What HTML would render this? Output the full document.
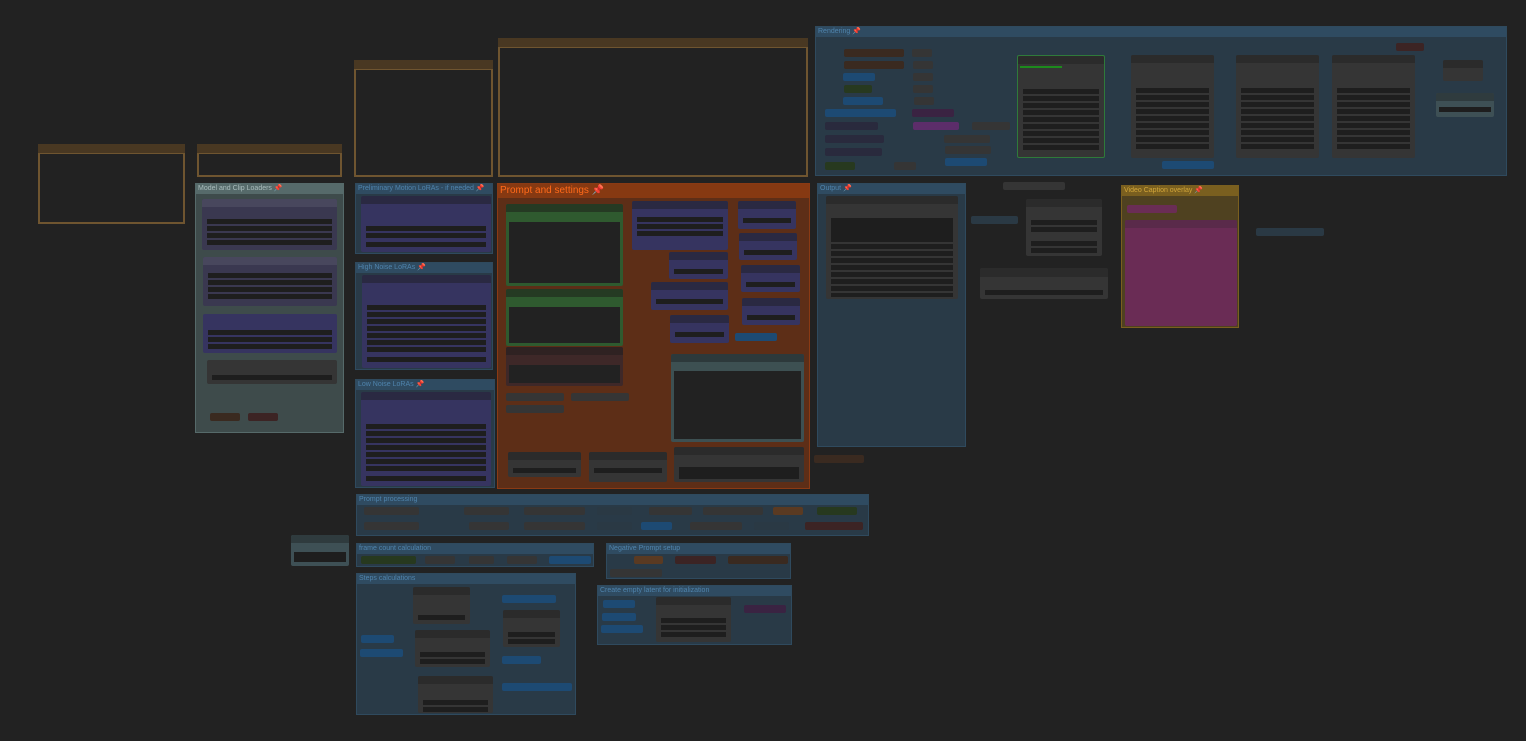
<!DOCTYPE html><html><head><style>
body{margin:0;width:1526px;height:741px;background:#222;overflow:hidden;font-family:"Liberation Sans",sans-serif;position:relative}
div{position:absolute;box-sizing:border-box}
.g{background:#293a47;border:1px solid #2f4a5e}
.g>.h{left:0;top:0;right:0;height:10px;background:#2f4b61;color:#4f84ad;font-size:7px;line-height:10px;padding-left:2px;white-space:nowrap;overflow:hidden}
.f{background:#222;border:2px solid #6f5530}
.f>.h{left:-2px;top:-10px;right:-2px;height:9px;background:#493822}
.n{background:#353535;border-radius:2px}
.n>.t{left:0;top:0;right:0;height:8px;background:#2b2b2b;border-radius:2px 2px 0 0}
.p{background:#363460}.p>.t{background:#2a2942}
.w{background:#1e1e1e;height:5px;left:5px;right:5px}
.s{height:8px;border-radius:2px;background:#353535}
.b{background:#1d4a73}.gr{background:#27391f}.br{background:#3a2a20}.rd{background:#3c2424}.pu{background:#3a2342}.dk{background:#292a3d}
</style></head><body>
<!-- frames -->
<div class="f" style="left:38px;top:152px;width:147px;height:72px"><div class="h"></div></div>
<div class="f" style="left:197px;top:152px;width:145px;height:25px"><div class="h"></div></div>
<div class="f" style="left:354px;top:68px;width:139px;height:109px"><div class="h"></div></div>
<div class="f" style="left:498px;top:46px;width:310px;height:131px"><div class="h"></div></div>

<!-- Model and clip -->
<div class="g" style="left:195px;top:183px;width:149px;height:250px;background:#3e4b4b;border-color:#566a6a"><div class="h" style="background:#566a6a;color:#a9bcbc">Model and Clip Loaders 📌</div>
<div class="n p" style="left:6px;top:15px;width:135px;height:51px;background:#3a3850"><div class="t" style="background:#48475d"></div><div class="w" style="top:20px"></div><div class="w" style="top:27px"></div><div class="w" style="top:34px"></div><div class="w" style="top:41px"></div></div>
<div class="n p" style="left:7px;top:73px;width:134px;height:49px;background:#3a3850"><div class="t" style="background:#48475d"></div><div class="w" style="top:16px"></div><div class="w" style="top:23px"></div><div class="w" style="top:30px"></div><div class="w" style="top:37px"></div></div>
<div class="n p" style="left:7px;top:130px;width:134px;height:39px"><div class="w" style="top:16px"></div><div class="w" style="top:23px"></div><div class="w" style="top:30px"></div></div>
<div class="n" style="left:11px;top:176px;width:130px;height:24px"><div class="w" style="top:15px"></div></div>
<div class="s br" style="left:14px;top:229px;width:30px"></div><div class="s rd" style="left:52px;top:229px;width:30px"></div>
</div>

<!-- LoRA groups -->
<div class="g" style="left:355px;top:183px;width:138px;height:71px"><div class="h">Preliminary Motion LoRAs - if needed 📌</div>
<div class="n p" style="left:5px;top:12px;width:130px;height:56px"><div class="t"></div><div class="w" style="top:30px"></div><div class="w" style="top:37px"></div><div class="w" style="top:46px"></div></div></div>
<div class="g" style="left:355px;top:262px;width:138px;height:108px"><div class="h">High Noise LoRAs 📌</div>
<div class="n p" style="left:6px;top:12px;width:129px;height:93px"><div class="t"></div><div class="w" style="top:30px"></div><div class="w" style="top:37px"></div><div class="w" style="top:44px"></div><div class="w" style="top:51px"></div><div class="w" style="top:58px"></div><div class="w" style="top:65px"></div><div class="w" style="top:72px"></div><div class="w" style="top:82px"></div></div></div>
<div class="g" style="left:355px;top:379px;width:140px;height:109px"><div class="h">Low Noise LoRAs 📌</div>
<div class="n p" style="left:5px;top:12px;width:130px;height:94px"><div class="t"></div><div class="w" style="top:32px"></div><div class="w" style="top:39px"></div><div class="w" style="top:46px"></div><div class="w" style="top:53px"></div><div class="w" style="top:60px"></div><div class="w" style="top:67px"></div><div class="w" style="top:74px"></div><div class="w" style="top:84px"></div></div></div>

<!-- Prompt -->
<div class="g" style="left:497px;top:183px;width:313px;height:306px;background:#5d2e17;border-color:#8a3a14"><div class="h" style="height:14px;background:#863912;color:#ff6a1a;font-size:10px;line-height:14px">Prompt and settings 📌</div>
<div class="n" style="left:8px;top:20px;width:117px;height:82px;background:#2f5a2f"><div class="t" style="background:#253a23"></div><div style="left:3px;top:18px;right:3px;bottom:3px;background:#222"></div></div>
<div class="n" style="left:8px;top:105px;width:117px;height:57px;background:#2f5a2f"><div class="t" style="background:#253a23"></div><div style="left:3px;top:18px;right:3px;bottom:3px;background:#222"></div></div>
<div class="n" style="left:8px;top:163px;width:117px;height:39px;background:#3e2828"><div class="t" style="background:#2f2222"></div><div style="left:3px;top:18px;right:3px;bottom:3px;background:#222"></div></div>
<div class="n p" style="left:134px;top:17px;width:96px;height:49px"><div class="t"></div><div class="w" style="top:16px"></div><div class="w" style="top:23px"></div><div class="w" style="top:30px"></div></div>
<div class="n p" style="left:240px;top:17px;width:58px;height:28px"><div class="t"></div><div class="w" style="top:17px"></div></div>
<div class="n p" style="left:241px;top:49px;width:58px;height:27px"><div class="t"></div><div class="w" style="top:17px"></div></div>
<div class="n p" style="left:171px;top:68px;width:59px;height:27px"><div class="t"></div><div class="w" style="top:17px"></div></div>
<div class="n p" style="left:243px;top:81px;width:59px;height:27px"><div class="t"></div><div class="w" style="top:17px"></div></div>
<div class="n p" style="left:153px;top:98px;width:77px;height:28px"><div class="t"></div><div class="w" style="top:17px"></div></div>
<div class="n p" style="left:244px;top:114px;width:58px;height:27px"><div class="t"></div><div class="w" style="top:17px"></div></div>
<div class="n p" style="left:172px;top:131px;width:59px;height:28px"><div class="t"></div><div class="w" style="top:17px"></div></div>
<div class="s b" style="left:237px;top:149px;width:42px"></div>
<div class="n" style="left:173px;top:170px;width:133px;height:88px;background:#3d5052"><div class="t" style="background:#2d393b"></div><div style="left:3px;top:17px;right:3px;bottom:3px;background:#222"></div></div>
<div class="s" style="left:8px;top:209px;width:58px"></div><div class="s" style="left:8px;top:221px;width:58px"></div><div class="s" style="left:73px;top:209px;width:58px"></div>
<div class="n" style="left:10px;top:268px;width:73px;height:25px"><div class="t"></div><div class="w" style="top:16px"></div></div>
<div class="n" style="left:91px;top:268px;width:78px;height:30px"><div class="t"></div><div class="w" style="top:16px"></div></div>
<div class="n" style="left:176px;top:263px;width:130px;height:35px"><div class="t"></div><div class="w" style="top:20px;height:12px"></div></div>
</div>

<!-- Rendering -->
<div class="g" style="left:815px;top:26px;width:692px;height:150px"><div class="h">Rendering 📌</div>
<div class="s br" style="left:28px;top:22px;width:60px"></div><div class="s br" style="left:28px;top:34px;width:60px"></div>
<div class="s b" style="left:27px;top:46px;width:32px"></div><div class="s gr" style="left:28px;top:58px;width:28px"></div><div class="s b" style="left:27px;top:70px;width:40px"></div>
<div class="s b" style="left:9px;top:82px;width:71px"></div><div class="s dk" style="left:9px;top:95px;width:53px"></div><div class="s dk" style="left:9px;top:108px;width:59px"></div><div class="s dk" style="left:9px;top:121px;width:57px"></div><div class="s gr" style="left:9px;top:135px;width:30px"></div>
<div class="s" style="left:96px;top:22px;width:20px"></div><div class="s" style="left:97px;top:34px;width:20px"></div><div class="s" style="left:97px;top:46px;width:20px"></div><div class="s" style="left:97px;top:58px;width:20px"></div><div class="s" style="left:98px;top:70px;width:20px"></div>
<div class="s pu" style="left:96px;top:82px;width:42px"></div><div class="s" style="left:97px;top:95px;width:46px;background:#5c2d6a"></div>
<div class="s" style="left:156px;top:95px;width:38px"></div><div class="s" style="left:128px;top:108px;width:46px"></div><div class="s" style="left:129px;top:119px;width:46px"></div>
<div class="s b" style="left:129px;top:131px;width:42px"></div><div class="s" style="left:78px;top:135px;width:22px"></div>
<div class="n" style="left:201px;top:28px;width:88px;height:103px;border:1px solid #2f7a3a"><div class="t"></div><div style="left:2px;top:10px;width:42px;height:2px;background:#1d8a1d"></div>
<div class="w" style="top:33px"></div><div class="w" style="top:40px"></div><div class="w" style="top:47px"></div><div class="w" style="top:54px"></div><div class="w" style="top:61px"></div><div class="w" style="top:68px"></div><div class="w" style="top:75px"></div><div class="w" style="top:82px"></div><div class="w" style="top:89px"></div></div>
<div class="n" style="left:315px;top:28px;width:83px;height:103px"><div class="t"></div><div class="w" style="top:33px"></div><div class="w" style="top:40px"></div><div class="w" style="top:47px"></div><div class="w" style="top:54px"></div><div class="w" style="top:61px"></div><div class="w" style="top:68px"></div><div class="w" style="top:75px"></div><div class="w" style="top:82px"></div><div class="w" style="top:89px"></div></div>
<div class="n" style="left:420px;top:28px;width:83px;height:103px"><div class="t"></div><div class="w" style="top:33px"></div><div class="w" style="top:40px"></div><div class="w" style="top:47px"></div><div class="w" style="top:54px"></div><div class="w" style="top:61px"></div><div class="w" style="top:68px"></div><div class="w" style="top:75px"></div><div class="w" style="top:82px"></div><div class="w" style="top:89px"></div></div>
<div class="n" style="left:516px;top:28px;width:83px;height:103px"><div class="t"></div><div class="w" style="top:33px"></div><div class="w" style="top:40px"></div><div class="w" style="top:47px"></div><div class="w" style="top:54px"></div><div class="w" style="top:61px"></div><div class="w" style="top:68px"></div><div class="w" style="top:75px"></div><div class="w" style="top:82px"></div><div class="w" style="top:89px"></div></div>
<div class="s b" style="left:346px;top:134px;width:52px"></div>
<div class="s rd" style="left:580px;top:16px;width:28px"></div>
<div class="n" style="left:627px;top:33px;width:40px;height:21px"><div class="t"></div></div>
<div class="n" style="left:620px;top:66px;width:58px;height:24px;background:#3e5055"><div class="t" style="background:#2f3b3e"></div><div class="w" style="top:14px;left:3px;right:3px"></div></div>
</div>

<!-- Output -->
<div class="g" style="left:817px;top:183px;width:149px;height:264px"><div class="h">Output 📌</div>
<div class="n" style="left:8px;top:12px;width:132px;height:103px"><div class="t"></div><div class="w" style="top:22px;height:24px"></div><div class="w" style="top:48px"></div><div class="w" style="top:55px"></div><div class="w" style="top:62px"></div><div class="w" style="top:69px"></div><div class="w" style="top:76px"></div><div class="w" style="top:83px"></div><div class="w" style="top:90px"></div><div class="w" style="top:97px;height:4px"></div></div></div>

<div class="s" style="left:1003px;top:182px;width:62px"></div>
<div class="n" style="left:1026px;top:199px;width:76px;height:57px"><div class="t"></div><div class="w" style="top:21px"></div><div class="w" style="top:28px"></div><div class="w" style="top:42px"></div><div class="w" style="top:49px"></div></div>
<div class="s" style="left:971px;top:216px;width:47px;background:#2a3944"></div>
<div class="n" style="left:980px;top:268px;width:128px;height:31px"><div class="t" style="height:9px"></div><div class="w" style="top:22px"></div></div>
<div class="s" style="left:1256px;top:228px;width:68px;background:#2a3944"></div>
<div class="s br" style="left:814px;top:455px;width:50px"></div>
<div class="n" style="left:291px;top:535px;width:58px;height:31px;background:#3e5055"><div class="t" style="background:#2f3b3e"></div><div class="w" style="top:17px;left:3px;right:3px;height:10px"></div></div>

<!-- Video caption -->
<div class="g" style="left:1121px;top:185px;width:118px;height:143px;background:#4f4120;border-color:#7a5f1f"><div class="h" style="background:#7a5f1f;color:#d2a63a">Video Caption overlay 📌</div>
<div class="s" style="left:5px;top:19px;width:50px;background:#6a2d55"></div>
<div class="n" style="left:3px;top:34px;width:112px;height:106px;background:#6a2c55"><div class="t" style="background:#5a2a4a"></div></div></div>

<!-- bottom groups -->
<div class="g" style="left:356px;top:494px;width:513px;height:42px"><div class="h">Prompt processing</div>
<div class="s" style="left:7px;top:12px;width:55px"></div><div class="s" style="left:107px;top:12px;width:45px"></div><div class="s" style="left:167px;top:12px;width:61px"></div><div class="s" style="left:240px;top:12px;width:35px;background:#2a3944"></div><div class="s" style="left:292px;top:12px;width:43px"></div><div class="s" style="left:346px;top:12px;width:60px"></div><div class="s br" style="left:416px;top:12px;width:30px;background:#5a3a22"></div><div class="s gr" style="left:460px;top:12px;width:40px"></div>
<div class="s" style="left:7px;top:27px;width:55px"></div><div class="s" style="left:112px;top:27px;width:40px"></div><div class="s" style="left:167px;top:27px;width:61px"></div><div class="s" style="left:240px;top:27px;width:35px;background:#2a3944"></div><div class="s b" style="left:284px;top:27px;width:31px"></div><div class="s" style="left:333px;top:27px;width:52px"></div><div class="s" style="left:397px;top:27px;width:35px;background:#2a3944"></div><div class="s rd" style="left:448px;top:27px;width:58px"></div></div>
<div class="g" style="left:356px;top:543px;width:238px;height:24px"><div class="h">frame count calculation</div>
<div class="s gr" style="left:4px;top:12px;width:55px"></div><div class="s" style="left:68px;top:12px;width:30px"></div><div class="s" style="left:112px;top:12px;width:25px"></div><div class="s" style="left:150px;top:12px;width:30px"></div><div class="s b" style="left:192px;top:12px;width:42px"></div></div>
<div class="g" style="left:606px;top:543px;width:185px;height:36px"><div class="h">Negative Prompt setup</div>
<div class="s" style="left:27px;top:12px;width:29px;background:#5a3a22"></div><div class="s rd" style="left:68px;top:12px;width:41px"></div><div class="s br" style="left:121px;top:12px;width:60px"></div><div class="s" style="left:3px;top:25px;width:52px"></div></div>
<div class="g" style="left:356px;top:573px;width:220px;height:142px"><div class="h">Steps calculations</div>
<div class="n" style="left:56px;top:13px;width:57px;height:37px"><div class="t"></div><div class="w" style="top:28px"></div></div>
<div class="n" style="left:58px;top:56px;width:75px;height:37px"><div class="t"></div><div class="w" style="top:22px"></div><div class="w" style="top:29px"></div></div>
<div class="n" style="left:61px;top:102px;width:75px;height:37px"><div class="t"></div><div class="w" style="top:24px"></div><div class="w" style="top:31px"></div></div>
<div class="n" style="left:146px;top:36px;width:57px;height:37px"><div class="t"></div><div class="w" style="top:22px"></div><div class="w" style="top:29px"></div></div>
<div class="s b" style="left:145px;top:21px;width:54px"></div><div class="s b" style="left:145px;top:82px;width:39px"></div><div class="s b" style="left:145px;top:109px;width:70px"></div>
<div class="s b" style="left:4px;top:61px;width:33px"></div><div class="s b" style="left:3px;top:75px;width:43px"></div></div>
<div class="g" style="left:597px;top:585px;width:195px;height:60px"><div class="h">Create empty latent for initialization</div>
<div class="s b" style="left:5px;top:14px;width:32px"></div><div class="s b" style="left:4px;top:27px;width:34px"></div><div class="s b" style="left:3px;top:39px;width:42px"></div>
<div class="n" style="left:58px;top:11px;width:75px;height:45px"><div class="t"></div><div class="w" style="top:21px"></div><div class="w" style="top:28px"></div><div class="w" style="top:35px"></div></div>
<div class="s pu" style="left:146px;top:19px;width:42px"></div></div>
</body></html>
